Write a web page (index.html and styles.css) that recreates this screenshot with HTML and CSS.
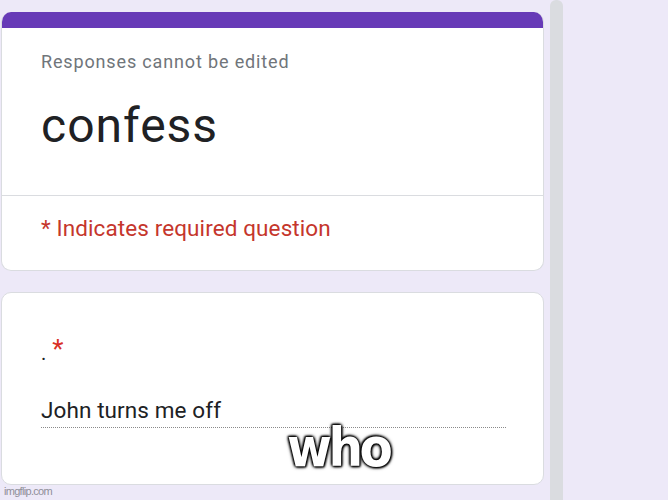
FILE: index.html
```html
<!DOCTYPE html>
<html>
<head>
<meta charset="utf-8">
<link rel="stylesheet" href="styles.css">
</head>
<body>
<div class="page">
  <main class="column">
    <section class="card header-card">
      <div class="accent"></div>
      <div class="header-top">
        <p class="note">Responses cannot be edited</p>
        <h1 class="title">confess</h1>
      </div>
      <div class="header-bottom">
        <p class="required">* Indicates required question</p>
      </div>
    </section>
    <section class="card question-card">
      <div class="question">.<span class="star">*</span></div>
      <div class="answer">John turns me off</div>
    </section>
  </main>
  <div class="scrollbar"></div>
</div>
<div class="meme">who</div>
<div class="watermark">imgflip.com</div>
</body>
</html>
```
FILE: styles.css
```css
html, body {
  margin: 0;
  padding: 0;
}
body {
  background: #ede9f8;
  font-family: Roboto, "Liberation Sans", sans-serif;
  width: 668px;
  height: 500px;
  overflow: hidden;
  position: relative;
}
.page {
  display: flex;
  align-items: flex-start;
  height: 500px;
}
.column {
  margin-left: 1px;
  padding-top: 12px;
  width: 543px;
  display: flex;
  flex-direction: column;
  gap: 21px;
}
.card {
  background: #fff;
  border: 1px solid #dadce0;
  border-radius: 10px;
  box-sizing: border-box;
}
.header-card {
  overflow: hidden;
  border-top: none;
  height: 259px;
}
.accent {
  height: 16px;
  background: #673ab7;
}
.header-top {
  padding: 22px 0 0 39px;
  height: 168px;
  box-sizing: border-box;
  border-bottom: 1px solid #dadce0;
}
.note {
  margin: 0;
  font-size: 18px;
  color: #70757a;
  letter-spacing: 0.85px;
  line-height: 24px;
}
.title {
  margin: 24px 0 0;
  font-weight: 400;
  font-size: 48px;
  line-height: 56px;
  letter-spacing: 1px;
  color: #202124;
}
.header-bottom {
  padding: 19px 0 0 39px;
}
.required {
  margin: 0;
  color: #c5362c;
  font-size: 22.5px;
  line-height: 26px;
  letter-spacing: 0.1px;
}
.question-card {
  height: 193px;
  padding: 46px 0 0 39px;
}
.question {
  font-size: 20px;
  color: #202124;
  line-height: 24px;
}
.star {
  color: #d93025;
  font-size: 26px;
  margin-left: 6px;
  position: relative;
  top: -2px;
}
.answer {
  margin-top: 31px;
  width: 465px;
  font-size: 22.5px;
  line-height: 28px;
  letter-spacing: 0.1px;
  color: #202124;
  padding-bottom: 3px;
  border-bottom: 1px dotted #8a8a8a;
}
.scrollbar {
  margin-left: 6px;
  width: 13px;
  height: 500px;
  background: #dadce0;
  border-radius: 6px 6px 0 0;
}
.meme {
  position: absolute;
  left: 287px;
  top: 418px;
  font-family: "DejaVu Sans Condensed", "Liberation Sans", sans-serif;
  font-weight: 700;
  font-size: 54px;
  line-height: 60px;
  color: #fff;
  letter-spacing: -3.5px;
  text-shadow: 0 0 3px #000, 0 0 3px #000, 0 0 4px #000, 1px 1px 2px #000, -1px -1px 2px #000;
}
.watermark {
  position: absolute;
  left: 4px;
  top: 485px;
  font-family: "Liberation Sans", sans-serif;
  font-size: 11px;
  letter-spacing: -0.7px;
  color: #8f8f99;
}
```
